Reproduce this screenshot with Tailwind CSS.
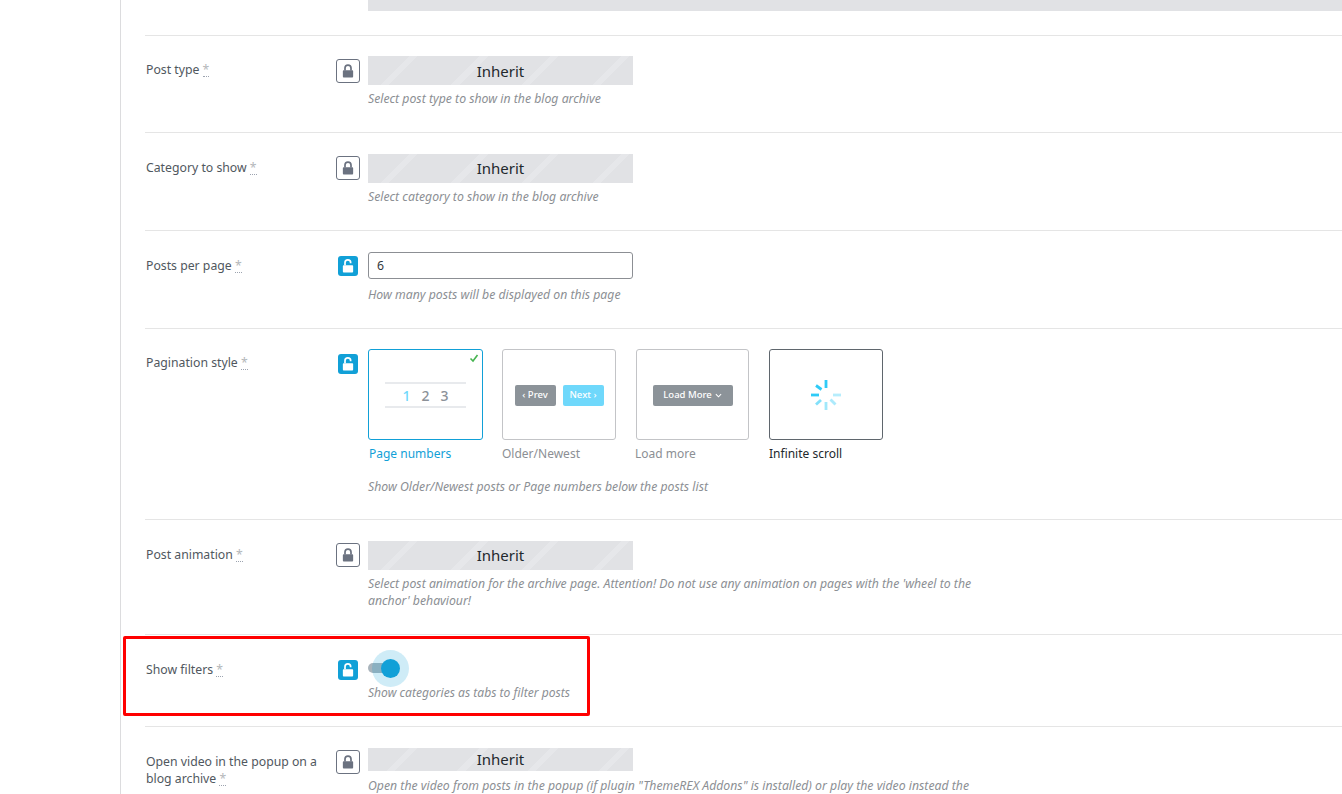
<!DOCTYPE html>
<html lang="en">

<head>
    <meta charset="UTF-8">
    <title>Blog archive options</title>
    <script src="https://cdn.jsdelivr.net/npm/@tailwindcss/browser@4"></script>
</head>

<body class="h-[794px] overflow-hidden bg-white font-['Noto_Sans',sans-serif] text-[12.25px] text-[#50575e]">
    <svg class="hidden">
        <symbol id="lock" viewBox="0 0 14 16">
            <path d="M3.500 7.500V4.600a3.500 3.500 0 0 1 7 0V7.500" fill="none" stroke="currentColor" stroke-width="2" />
            <rect x="1" y="7" width="12" height="8.500" rx="1" fill="currentColor" />
        </symbol>
        <symbol id="unlock" viewBox="0 0 14 16">
            <path d="M3.500 7V4.200a3.300 3.300 0 0 1 6.600 0V4.800" fill="none" stroke="currentColor" stroke-width="2" />
            <rect x="1" y="7" width="12" height="8.500" rx="1" fill="currentColor" />
        </symbol>
    </svg>

    <main class="ml-[120px] h-full border-l border-[#dcdcde] pl-[24px]">
        <div class="h-[36px] border-b border-[#e5e5e5] pl-[223px]">
            <div class="h-[11px] w-[975px] bg-[#e1e2e5]"></div>
        </div>

        <!-- Post type -->
        <section class="flex h-[97px] border-b border-[#e5e5e5] pt-[20px]">
            <h3 class="w-[191px] pt-[5px] pl-px leading-[18px]">Post type <span class="inline-block h-[14px] border-b border-dotted border-[#9ca3af] leading-[14px] text-[#b4b7ba]">*</span></h3>
            <button class="mt-[3px] flex size-[24px] items-center justify-center rounded-[3px] border border-[#6b7280] text-[#6b7280]"><svg class="h-[14px] w-[12px]"><use href="#lock" /></svg></button>
            <div class="ml-[8px]">
                <div class="flex h-[29px] w-[265px] items-center justify-center bg-[#e1e2e5] bg-[repeating-linear-gradient(135deg,#e1e2e5_0,#e1e2e5_29px,#e6e7ea_29px,#e6e7ea_35px,#e1e2e5_35px,#e1e2e5_50px)] pt-[2px] text-[15px] text-[#23282d]">Inherit</div>
                <p class="mt-[5px] leading-[18px] text-[#8c8f94] italic">Select post type to show in the blog archive</p>
            </div>
        </section>

        <!-- Category to show -->
        <section class="flex h-[98px] border-b border-[#e5e5e5] pt-[21px]">
            <h3 class="w-[191px] pt-[5px] pl-px leading-[18px]">Category to show <span class="inline-block h-[14px] border-b border-dotted border-[#9ca3af] leading-[14px] text-[#b4b7ba]">*</span></h3>
            <button class="mt-[2px] flex size-[24px] items-center justify-center rounded-[3px] border border-[#6b7280] text-[#6b7280]"><svg class="h-[14px] w-[12px]"><use href="#lock" /></svg></button>
            <div class="ml-[8px]">
                <div class="flex h-[29px] w-[265px] items-center justify-center bg-[#e1e2e5] bg-[repeating-linear-gradient(135deg,#e1e2e5_0,#e1e2e5_29px,#e6e7ea_29px,#e6e7ea_35px,#e1e2e5_35px,#e1e2e5_50px)] text-[15px] text-[#23282d]">Inherit</div>
                <p class="mt-[5px] leading-[18px] text-[#8c8f94] italic">Select category to show in the blog archive</p>
            </div>
        </section>

        <!-- Posts per page -->
        <section class="flex h-[98px] border-b border-[#e5e5e5] pt-[21px]">
            <h3 class="w-[191px] pt-[5px] pl-px leading-[18px]">Posts per page <span class="inline-block h-[14px] border-b border-dotted border-[#9ca3af] leading-[14px] text-[#b4b7ba]">*</span></h3>
            <button class="mt-[4px] ml-[2px] flex size-[20px] items-center justify-center rounded-[3px] bg-[#11a0d7] text-white"><svg class="h-[14px] w-[12px]"><use href="#unlock" /></svg></button>
            <div class="ml-[10px]">
                <input value="6" class="block h-[27px] w-[265px] rounded-[3px] border border-[#8c8f94] px-[8px] text-[12.25px] text-[#32373c]">
                <p class="mt-[7px] leading-[18px] text-[#8c8f94] italic">How many posts will be displayed on this page</p>
            </div>
        </section>

        <!-- Pagination style -->
        <section class="flex h-[191px] border-b border-[#e5e5e5] pt-[20px]">
            <h3 class="w-[191px] pt-[5px] pl-px leading-[18px]">Pagination style <span class="inline-block h-[14px] border-b border-dotted border-[#9ca3af] leading-[14px] text-[#b4b7ba]">*</span></h3>
            <button class="mt-[5px] ml-[2px] flex size-[20px] items-center justify-center rounded-[3px] bg-[#11a0d7] text-white"><svg class="h-[14px] w-[12px]"><use href="#unlock" /></svg></button>
            <div class="ml-[10px]">
                <div class="flex gap-[19px]">
                    <div class="w-[115px]">
                        <div class="relative flex h-[91px] items-center justify-center rounded-[3px] border border-[#11a0d7] pt-[1px]">
                            <svg class="absolute top-[3px] right-[3px] size-[10px] text-[#46b450]" viewBox="0 0 10 10"><path d="M1.500 5.500 4 8l4.500-6" fill="none" stroke="currentColor" stroke-width="1.600" /></svg>
                            <div class="flex h-[26px] w-[81px] items-center justify-center gap-[11px] border-y-2 border-[#e8eaed] text-[14px] font-medium text-[#8c9198]"><span class="text-[#6fd8fb]">1</span><span>2</span><span>3</span></div>
                        </div>
                        <p class="mt-[5px] pl-px text-[12px] leading-[18px] text-[#11a0d7]">Page numbers</p>
                    </div>
                    <div class="w-[114px]">
                        <div class="flex h-[91px] items-center justify-center gap-[7px] rounded-[3px] border border-[#c3c4c7] pt-[1px] text-[9.5px] font-medium text-white">
                            <span class="flex h-[21px] w-[41px] items-center justify-center rounded-[2px] bg-[#8c9399]">‹ Prev</span>
                            <span class="flex h-[21px] w-[41px] items-center justify-center rounded-[2px] bg-[#6fd8fb]">Next ›</span>
                        </div>
                        <p class="mt-[5px] text-[12px] leading-[18px] text-[#8c8f94]">Older/Newest</p>
                    </div>
                    <div class="ml-px w-[113px]">
                        <div class="flex h-[91px] items-center justify-center rounded-[3px] border border-[#c3c4c7] pt-[1px] text-[9.5px] font-medium text-white">
                            <span class="flex h-[21px] w-[80px] items-center justify-center gap-[3px] rounded-[2px] bg-[#8c9399]">Load More <svg class="size-[7px]" viewBox="0 0 8 8"><path d="M1 2.500 4 5.500l3-3" fill="none" stroke="currentColor" stroke-width="1.200" /></svg></span>
                        </div>
                        <p class="mt-[5px] -ml-px text-[12px] leading-[18px] text-[#8c8f94]">Load more</p>
                    </div>
                    <div class="ml-px w-[114px]">
                        <div class="flex h-[91px] items-center justify-center rounded-[3px] border border-[#5f666d] pt-[1px]">
                            <svg class="size-[32px]" viewBox="0 0 32 32" fill="none" stroke="#2fcbf7" stroke-width="2.800">
                                <path d="M16 1v8" />
                                <path d="M23 16h8" opacity=".35" />
                                <path d="M20.500 20.500l5 5" opacity=".4" />
                                <path d="M16 23v8" opacity=".45" />
                                <path d="M11 21l-5 4.500" opacity=".6" />
                                <path d="M1 16h8" />
                                <path d="M6 6.500l5.500 4" />
                            </svg>
                        </div>
                        <p class="mt-[5px] text-[12px] leading-[18px] text-[#23282d]">Infinite scroll</p>
                    </div>
                </div>
                <p class="mt-[15px] leading-[18px] text-[#8c8f94] italic">Show Older/Newest posts or Page numbers below the posts list</p>
            </div>
        </section>

        <!-- Post animation -->
        <section class="flex h-[115px] border-b border-[#e5e5e5] pt-[21px]">
            <h3 class="w-[191px] pt-[5px] pl-px leading-[18px]">Post animation <span class="inline-block h-[14px] border-b border-dotted border-[#9ca3af] leading-[14px] text-[#b4b7ba]">*</span></h3>
            <button class="mt-[2px] flex size-[24px] items-center justify-center rounded-[3px] border border-[#6b7280] text-[#6b7280]"><svg class="h-[14px] w-[12px]"><use href="#lock" /></svg></button>
            <div class="ml-[8px]">
                <div class="flex h-[29px] w-[265px] items-center justify-center bg-[#e1e2e5] bg-[repeating-linear-gradient(135deg,#e1e2e5_0,#e1e2e5_29px,#e6e7ea_29px,#e6e7ea_35px,#e1e2e5_35px,#e1e2e5_50px)] text-[15px] text-[#23282d]">Inherit</div>
                <p class="mt-[5px] w-[620px] leading-[17px] text-[#8c8f94] italic">Select post animation for the archive page. Attention! Do not use any animation on pages with the 'wheel to the anchor' behaviour!</p>
            </div>
        </section>

        <!-- Show filters, outlined in red by the annotation box -->
        <section class="relative flex h-[92px] border-b border-[#e5e5e5] pt-[25px]">
            <div class="pointer-events-none absolute top-[1px] -left-[22px] h-[80px] w-[467px] rounded-[2px] border-[3px] border-[#ff0000]"></div>
            <h3 class="w-[191px] pt-px pl-px leading-[18px]">Show filters <span class="inline-block h-[14px] border-b border-dotted border-[#9ca3af] leading-[14px] text-[#b4b7ba]">*</span></h3>
            <button class="ml-[2px] flex size-[20px] items-center justify-center rounded-[3px] bg-[#11a0d7] text-white"><svg class="h-[14px] w-[12px]"><use href="#unlock" /></svg></button>
            <div class="ml-[10px]">
                <div class="relative h-[19px] w-[32px]">
                    <span class="absolute top-[3px] left-0 h-[10px] w-[24px] rounded-full bg-[#a9b4bc]"></span>
                    <span class="absolute -top-px left-[13px] size-[19px] rounded-full bg-[#11a0d7] ring-[9px] ring-[#11a0d7]/20"></span>
                </div>
                <p class="mt-[5px] text-[12.1px] leading-[18px] text-[#8c8f94] italic">Show categories as tabs to filter posts</p>
            </div>
        </section>

        <!-- Open video in the popup -->
        <section class="flex border-b border-[#e5e5e5] pt-[21px]">
            <h3 class="w-[191px] pt-[5px] pl-px leading-[17px]">Open video in the popup on a<br>blog archive <span class="inline-block h-[14px] border-b border-dotted border-[#9ca3af] leading-[14px] text-[#b4b7ba]">*</span></h3>
            <button class="mt-[2px] flex size-[24px] items-center justify-center rounded-[3px] border border-[#6b7280] text-[#6b7280]"><svg class="h-[14px] w-[12px]"><use href="#lock" /></svg></button>
            <div class="ml-[8px]">
                <div class="flex h-[23px] w-[265px] items-center justify-center bg-[#e1e2e5] bg-[repeating-linear-gradient(135deg,#e1e2e5_0,#e1e2e5_29px,#e6e7ea_29px,#e6e7ea_35px,#e1e2e5_35px,#e1e2e5_50px)] text-[15px] text-[#23282d]">Inherit</div>
                <p class="mt-[6px] w-[620px] leading-[17px] text-[#8c8f94] italic">Open the video from posts in the popup (if plugin "ThemeREX Addons" is installed) or play the video instead the</p>
            </div>
        </section>
    </main>
</body>

</html>
